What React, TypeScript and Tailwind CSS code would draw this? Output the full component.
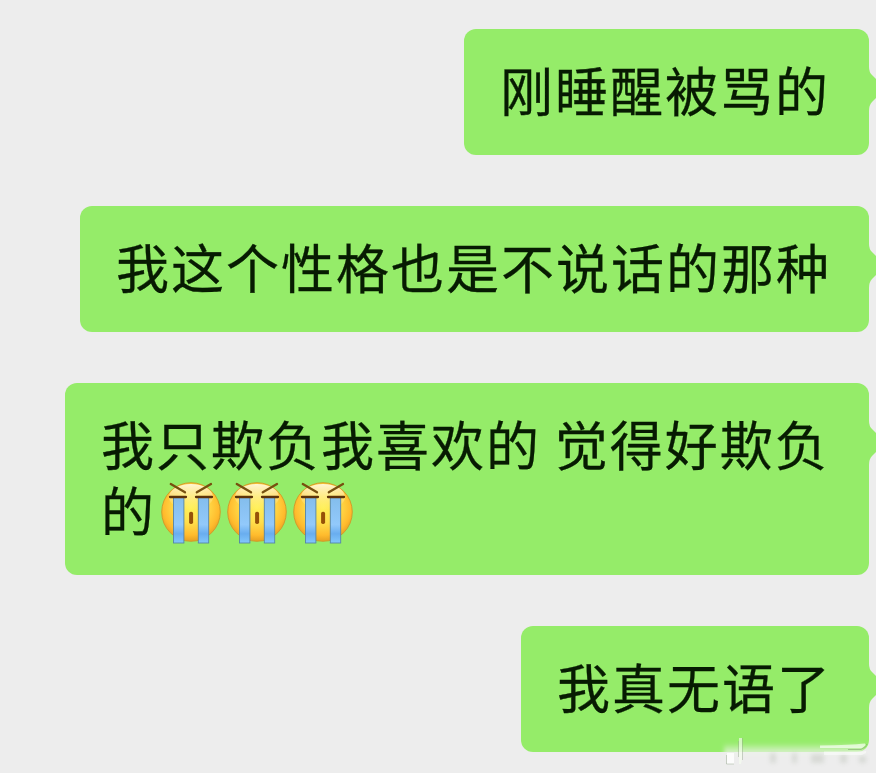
import type { ReactNode } from "react";

function CryingFace() {
  return (
    <svg
      viewBox="0 0 66 66"
      className="mt-[4px] -mr-px ml-px h-[66px] w-[66px] shrink-0"
      role="img"
      aria-label="大哭"
    >
      <defs>
        <radialGradient id="face" cx="0.5" cy="0.42" r="0.58">
          <stop offset="0" stopColor="#fff158" />
          <stop offset="0.45" stopColor="#ffdf4c" />
          <stop offset="0.82" stopColor="#ffbb2d" />
          <stop offset="1" stopColor="#e69f22" />
        </radialGradient>
        <linearGradient id="shine" x1="0" y1="0" x2="0" y2="1">
          <stop offset="0" stopColor="#fffbe6" stopOpacity="0.9" />
          <stop offset="1" stopColor="#fff3a0" stopOpacity="0" />
        </linearGradient>
        <linearGradient id="tear" x1="0" y1="0" x2="0" y2="1">
          <stop offset="0" stopColor="#83bdec" />
          <stop offset="0.6" stopColor="#92c9fb" />
          <stop offset="0.8" stopColor="#69adef" />
          <stop offset="1" stopColor="#82c7fc" />
        </linearGradient>
      </defs>
      <circle cx="34" cy="32" r="29.3" fill="url(#face)" stroke="#cf9828" strokeWidth="0.9" />
      <ellipse cx="34" cy="17" rx="22" ry="13" fill="url(#shine)" />
      <g fill="url(#tear)" stroke="#5585a8" strokeWidth="0.9">
        <rect x="16.5" y="17" width="10.4" height="46" />
        <rect x="41.3" y="17" width="10.4" height="46" />
      </g>
      <g stroke="#5c3208" strokeWidth="2.3" strokeLinecap="round">
        <path d="M13.8 4 28 12.3M54 4 39.8 12.3" stroke="#77500f" />
        <path d="M13 17H29M39 17H55" />
      </g>
      <rect x="32.1" y="31.8" width="4" height="12.2" rx="1.8" fill="#965108" />
    </svg>
  );
}

function Bubble({ width, children }: { width: string; children: ReactNode }) {
  return (
    <div
      className={`relative rounded-[12px] bg-[#95ec69] pt-[27px] pb-[33px] pl-[36px] text-[53px] leading-[66px] tracking-[2px] whitespace-nowrap text-[#071b02] [-webkit-text-stroke:0.3px_#071b02] ${width}`}
    >
      {children}
      {/* Tail, cut off by the edge of the window */}
      <svg viewBox="0 0 8 44" className="absolute top-[38px] left-full -ml-px h-[44px] w-[8px]">
        <path d="M0 0H1Q1 5 4 8L8 12V31L4 35Q1 38 1 44H0Z" fill="#95ec69" />
      </svg>
    </div>
  );
}

function Watermark() {
  return (
    <svg
      viewBox="0 0 160 40"
      className="absolute right-0 bottom-0 h-[40px] w-[160px]"
      aria-hidden="true"
    >
      <defs>
        <linearGradient id="haze" x1="0" y1="0" x2="0" y2="1">
          <stop offset="0" stopColor="#eeeeee" stopOpacity="0" />
          <stop offset="0.5" stopColor="#eef5e9" stopOpacity="0.6" />
          <stop offset="1" stopColor="#ededed" stopOpacity="0.85" />
        </linearGradient>
        <filter id="soft" filterUnits="userSpaceOnUse" x="0" y="0" width="160" height="40">
          <feGaussianBlur stdDeviation="2" />
        </filter>
      </defs>
      <path d="M8 10H148V24H8Z" fill="url(#haze)" filter="url(#soft)" />
      <g fill="#bfc4bb" filter="url(#soft)" opacity="0.45">
        <path d="M54 20h6v10h-6zM76 20h5v10h-5zM95 21h13v9H95zM124 21h7v9h-7zM143 23h7v7h-7z" />
      </g>
      <path d="M11 20H18V31H11Z" fill="#fff" opacity="0.8" />
      <path d="M23 5H26V26L25 31H23Z" fill="#f6fdf0" opacity="0.65" />
      <path d="M26.5 5V27M10.5 22V31H18M22.5 8V24" fill="none" stroke="#9aa892" strokeWidth="0.8" opacity="0.6" />
      <path d="M104 12.5Q135 12 149 10.5L150 12.5L146 15H104Z" fill="#fafff5" opacity="0.7" />
      <path d="M108 18.5H147L150 18V20L146 22H108Z" fill="#fff" opacity="0.5" />
      <path d="M132 16.5H145Q149 15 151 11" fill="none" stroke="#83a96e" strokeWidth="0.9" opacity="0.7" />
    </svg>
  );
}

export default function App() {
  return (
    <main className="relative flex h-[773px] w-[876px] flex-col items-end gap-[51px] overflow-hidden bg-[#ededed] pt-[29px] pr-[7px] font-['Noto_Sans_CJK_SC',sans-serif]">
      <Bubble width="w-[405px]">刚睡醒被骂的</Bubble>
      <Bubble width="w-[789px]">我这个性格也是不说话的那种</Bubble>
      <Bubble width="w-[804px]">
        <p>我只欺负我喜欢的 觉得好欺负</p>
        <div className="flex h-[66px]">
          <span>的</span>
          <CryingFace />
          <CryingFace />
          <CryingFace />
        </div>
      </Bubble>
      <Bubble width="w-[348px]">我真无语了</Bubble>
      <Watermark />
    </main>
  );
}
